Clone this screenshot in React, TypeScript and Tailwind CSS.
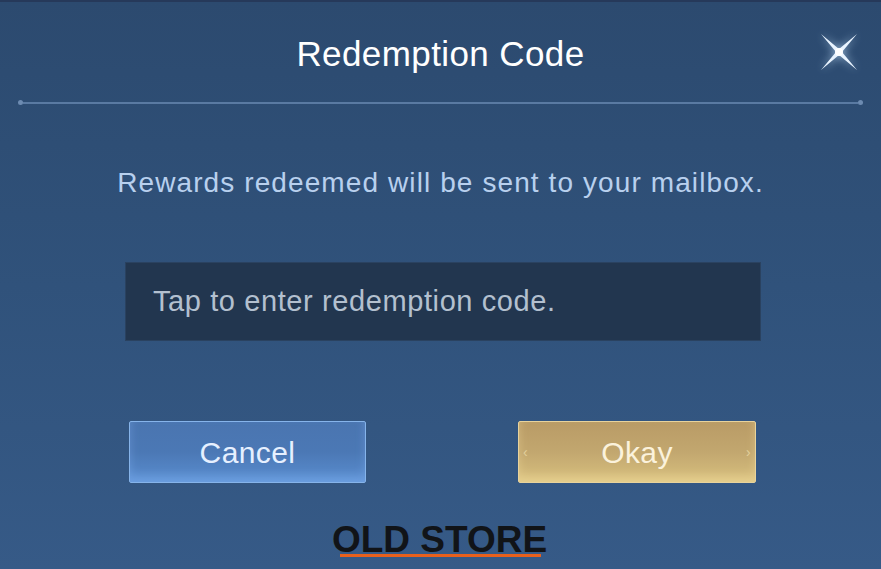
import React from 'react'

function Sparkle() {
  return (
    <svg width="44" height="44" viewBox="0 0 44 44" className="drop-shadow-[0_0_4px_rgba(200,230,255,0.8)]">
      <path d="M4 4 L22 19 L40 4 L25 22 L40 40 L22 25 L4 40 L19 22 Z" fill="#e9f4ff" />
      <circle cx="22" cy="22" r="4" fill="#ffffff" />
    </svg>
  )
}

export default function App() {
  return (
    <div
      className="w-[881px] h-[569px] overflow-hidden flex flex-col bg-gradient-to-b from-[#2c4a6f] via-[#30527b] to-[#365a87] text-white border-t-2 border-[#26395a]"
      style={{ fontFamily: '"Liberation Sans", Arial, sans-serif' }}
    >
      <div className="relative flex items-center justify-center h-[98px] pt-[4px]">
        <h1 className="text-[35px] text-white tracking-[0.4px] leading-none">Redemption Code</h1>
        <div className="absolute right-[20px] top-[28px]">
          <Sparkle />
        </div>
      </div>

      <div className="mx-[18px] flex items-center">
        <span className="w-[5px] h-[5px] rounded-full bg-[#6d8bb1]" />
        <div className="flex-1 h-[2px] bg-[#5a7aa2]" />
        <span className="w-[5px] h-[5px] rounded-full bg-[#6d8bb1]" />
      </div>

      <p className="mt-[64px] text-center text-[28px] tracking-[1.1px] text-[#b8d0ee] leading-none">
        Rewards redeemed will be sent to your mailbox.
      </p>

      <div className="mt-[65px] ml-[125px] w-[636px] h-[79px] bg-[#22364f] border border-[#2a4260] flex items-center pl-[27px]">
        <span className="text-[29px] tracking-[0.6px] text-[#b3c0cf]">Tap to enter redemption code.</span>
      </div>

      <div className="mt-[80px] flex">
        <button className="ml-[129px] w-[237px] h-[62px] rounded-[2px] border border-[#86b4ea] bg-gradient-to-b from-[#4a75b0] via-[#4b78b5] to-[#5a8ed0] shadow-[inset_0_-6px_10px_rgba(140,190,255,0.35)] text-[30px] tracking-[0.4px] text-[#e6f0ff]">
          Cancel
        </button>
        <button className="ml-[152px] w-[238px] h-[62px] rounded-[2px] border border-[#e8d39c] bg-gradient-to-b from-[#b99b66] via-[#c2a76f] to-[#d8c07f] shadow-[inset_0_-6px_10px_rgba(255,235,170,0.35)] text-[30px] tracking-[0.4px] text-[#fbf2dc] relative">
          <span className="absolute left-[4px] top-1/2 -translate-y-1/2 text-[14px] text-[#e2cf9c]">‹</span>
          Okay
          <span className="absolute right-[4px] top-1/2 -translate-y-1/2 text-[14px] text-[#e2cf9c]">›</span>
        </button>
      </div>

      <div className="mt-[38px] flex justify-center">
        <span className="relative text-[37px] font-bold text-[#111418] leading-none ml-[-2px]">
          OLD STORE
          <span className="absolute left-[8px] right-[6px] bottom-[1px] h-[3px] bg-[#e8601c]" />
        </span>
      </div>
    </div>
  )
}
